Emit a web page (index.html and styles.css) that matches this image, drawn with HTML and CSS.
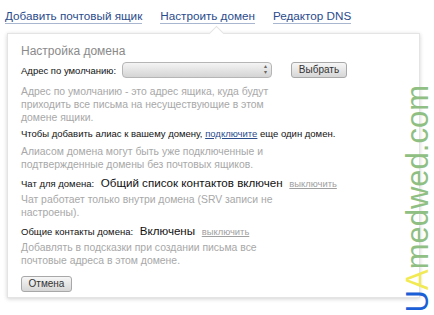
FILE: index.html
```html
<!DOCTYPE html>
<html>
<head>
  <title>Настройка домена</title>
  <link rel="stylesheet" href="styles.css">
</head>
<body>
  <div class="tabs">
    <a class="tab" href="#">Добавить почтовый ящик</a>
    <a class="tab" href="#">Настроить домен</a>
    <a class="tab" href="#">Редактор DNS</a>
  </div>

  <div class="panel">
    <h2>Настройка домена</h2>

    <div class="row">
      <span class="label">Адрес по умолчанию:</span>
      <span class="select"><span class="arrows">&#9652;<br>&#9662;</span></span>
      <button class="btn pick">Выбрать</button>
    </div>
    <p class="hint first">Адрес по умолчанию - это адрес ящика, куда будут<br>приходить все письма на несуществующие в этом<br>домене ящики.</p>

    <p class="line">Чтобы добавить алиас к вашему домену, <a href="#" class="link">подключите</a> еще один домен.</p>
    <p class="hint second">Алиасом домена могут быть уже подключенные и<br>подтвержденные домены без почтовых ящиков.</p>

    <p class="line tall">Чат для домена: <span class="big">Общий список контактов включен</span> <a href="#" class="off">выключить</a></p>
    <p class="hint">Чат работает только внутри домена (SRV записи не<br>настроены).</p>

    <p class="line tall">Общие контакты домена: <span class="big">Включены</span> <a href="#" class="off">выключить</a></p>
    <p class="hint">Добавлять в подсказки при создании письма все<br>почтовые адреса в этом домене.</p>

    <button class="btn cancel">Отмена</button>
  </div>

  <div class="mark"><span class="u">U</span><span class="a">A</span>medwed.com</div>
</body>
</html>
```

FILE: styles.css
```css
body {
  margin: 0;
  font-family: "Liberation Sans", Arial, sans-serif;
  background-color: #ffffff;
  width: 434px;
  height: 315px;
  overflow: hidden;
  position: relative;
}

.tabs {
  display: flex;
  gap: 18px;
  padding: 8px 0 0 5px;
  height: 18px;
}

.tab {
  font-size: 11.7px;
  color: #2b4c8c;
  text-decoration: none;
  border-bottom: 1px solid #a9b6d0;
  line-height: 15px;
  height: 15px;
}

.panel {
  position: relative;
  margin: 7px 0 0 7px;
  width: 398px;
  height: 253px;
  padding: 10px 0 0 13px;
  border: 1px solid #e4e4e4;
  box-shadow: 0 1px 4px rgba(0, 0, 0, 0.18);
  background-color: #ffffff;
}

.panel::before {
  content: "";
  position: absolute;
  top: -6px;
  left: 203px;
  width: 10px;
  height: 10px;
  background-color: #ffffff;
  border-left: 1px solid #e4e4e4;
  border-top: 1px solid #e4e4e4;
  transform: rotate(45deg);
}

h2 {
  margin: 0 0 4px 0;
  font-size: 12px;
  line-height: 14px;
  font-weight: normal;
  color: #8a8a8a;
}

.row {
  display: flex;
  align-items: center;
  height: 16px;
}

.label {
  font-size: 9.5px;
  color: #111111;
  width: 101px;
  white-space: nowrap;
}

.select {
  position: relative;
  width: 148px;
  height: 14px;
  border: 1px solid #b5b5b5;
  border-radius: 4px;
  background: linear-gradient(#f4f4f4, #d4d4d4);
}

.arrows {
  position: absolute;
  right: 4px;
  top: 0;
  font-size: 6px;
  line-height: 6px;
  color: #666666;
}

.btn {
  font-family: "Liberation Sans", Arial, sans-serif;
  font-size: 10px;
  color: #333333;
  border: 1px solid #a8a8a8;
  border-radius: 3px;
  background: linear-gradient(#f6f6f6, #d6d6d6);
  height: 16px;
  padding: 0;
  line-height: 14px;
}

.pick {
  margin-left: 19px;
  width: 56px;
}

.hint {
  margin: 0;
  font-size: 10.4px;
  line-height: 13px;
  color: #a8a8a8;
}

.hint.first {
  margin-top: 7px;
}

.hint.second {
  margin-top: 4px;
}

.line {
  margin: 3px 0 0 0;
  font-size: 9.5px;
  line-height: 14px;
  color: #111111;
  white-space: nowrap;
}

.line.tall {
  line-height: 18px;
}

.link {
  color: #2b4c8c;
}

.big {
  font-size: 11.6px;
  margin: 0 4px;
  color: #111111;
}

.off {
  color: #a0a0a0;
  font-size: 9.4px;
}

.cancel {
  display: block;
  margin-top: 9px;
  width: 51px;
}

.mark {
  position: absolute;
  left: 402px;
  top: 85px;
  writing-mode: vertical-rl;
  transform: rotate(180deg);
  font-size: 31px;
  line-height: 32px;
  color: #8fbf83;
}

.mark .u {
  color: #1a5fd6;
}

.mark .a {
  color: #f2ea55;
}
```
